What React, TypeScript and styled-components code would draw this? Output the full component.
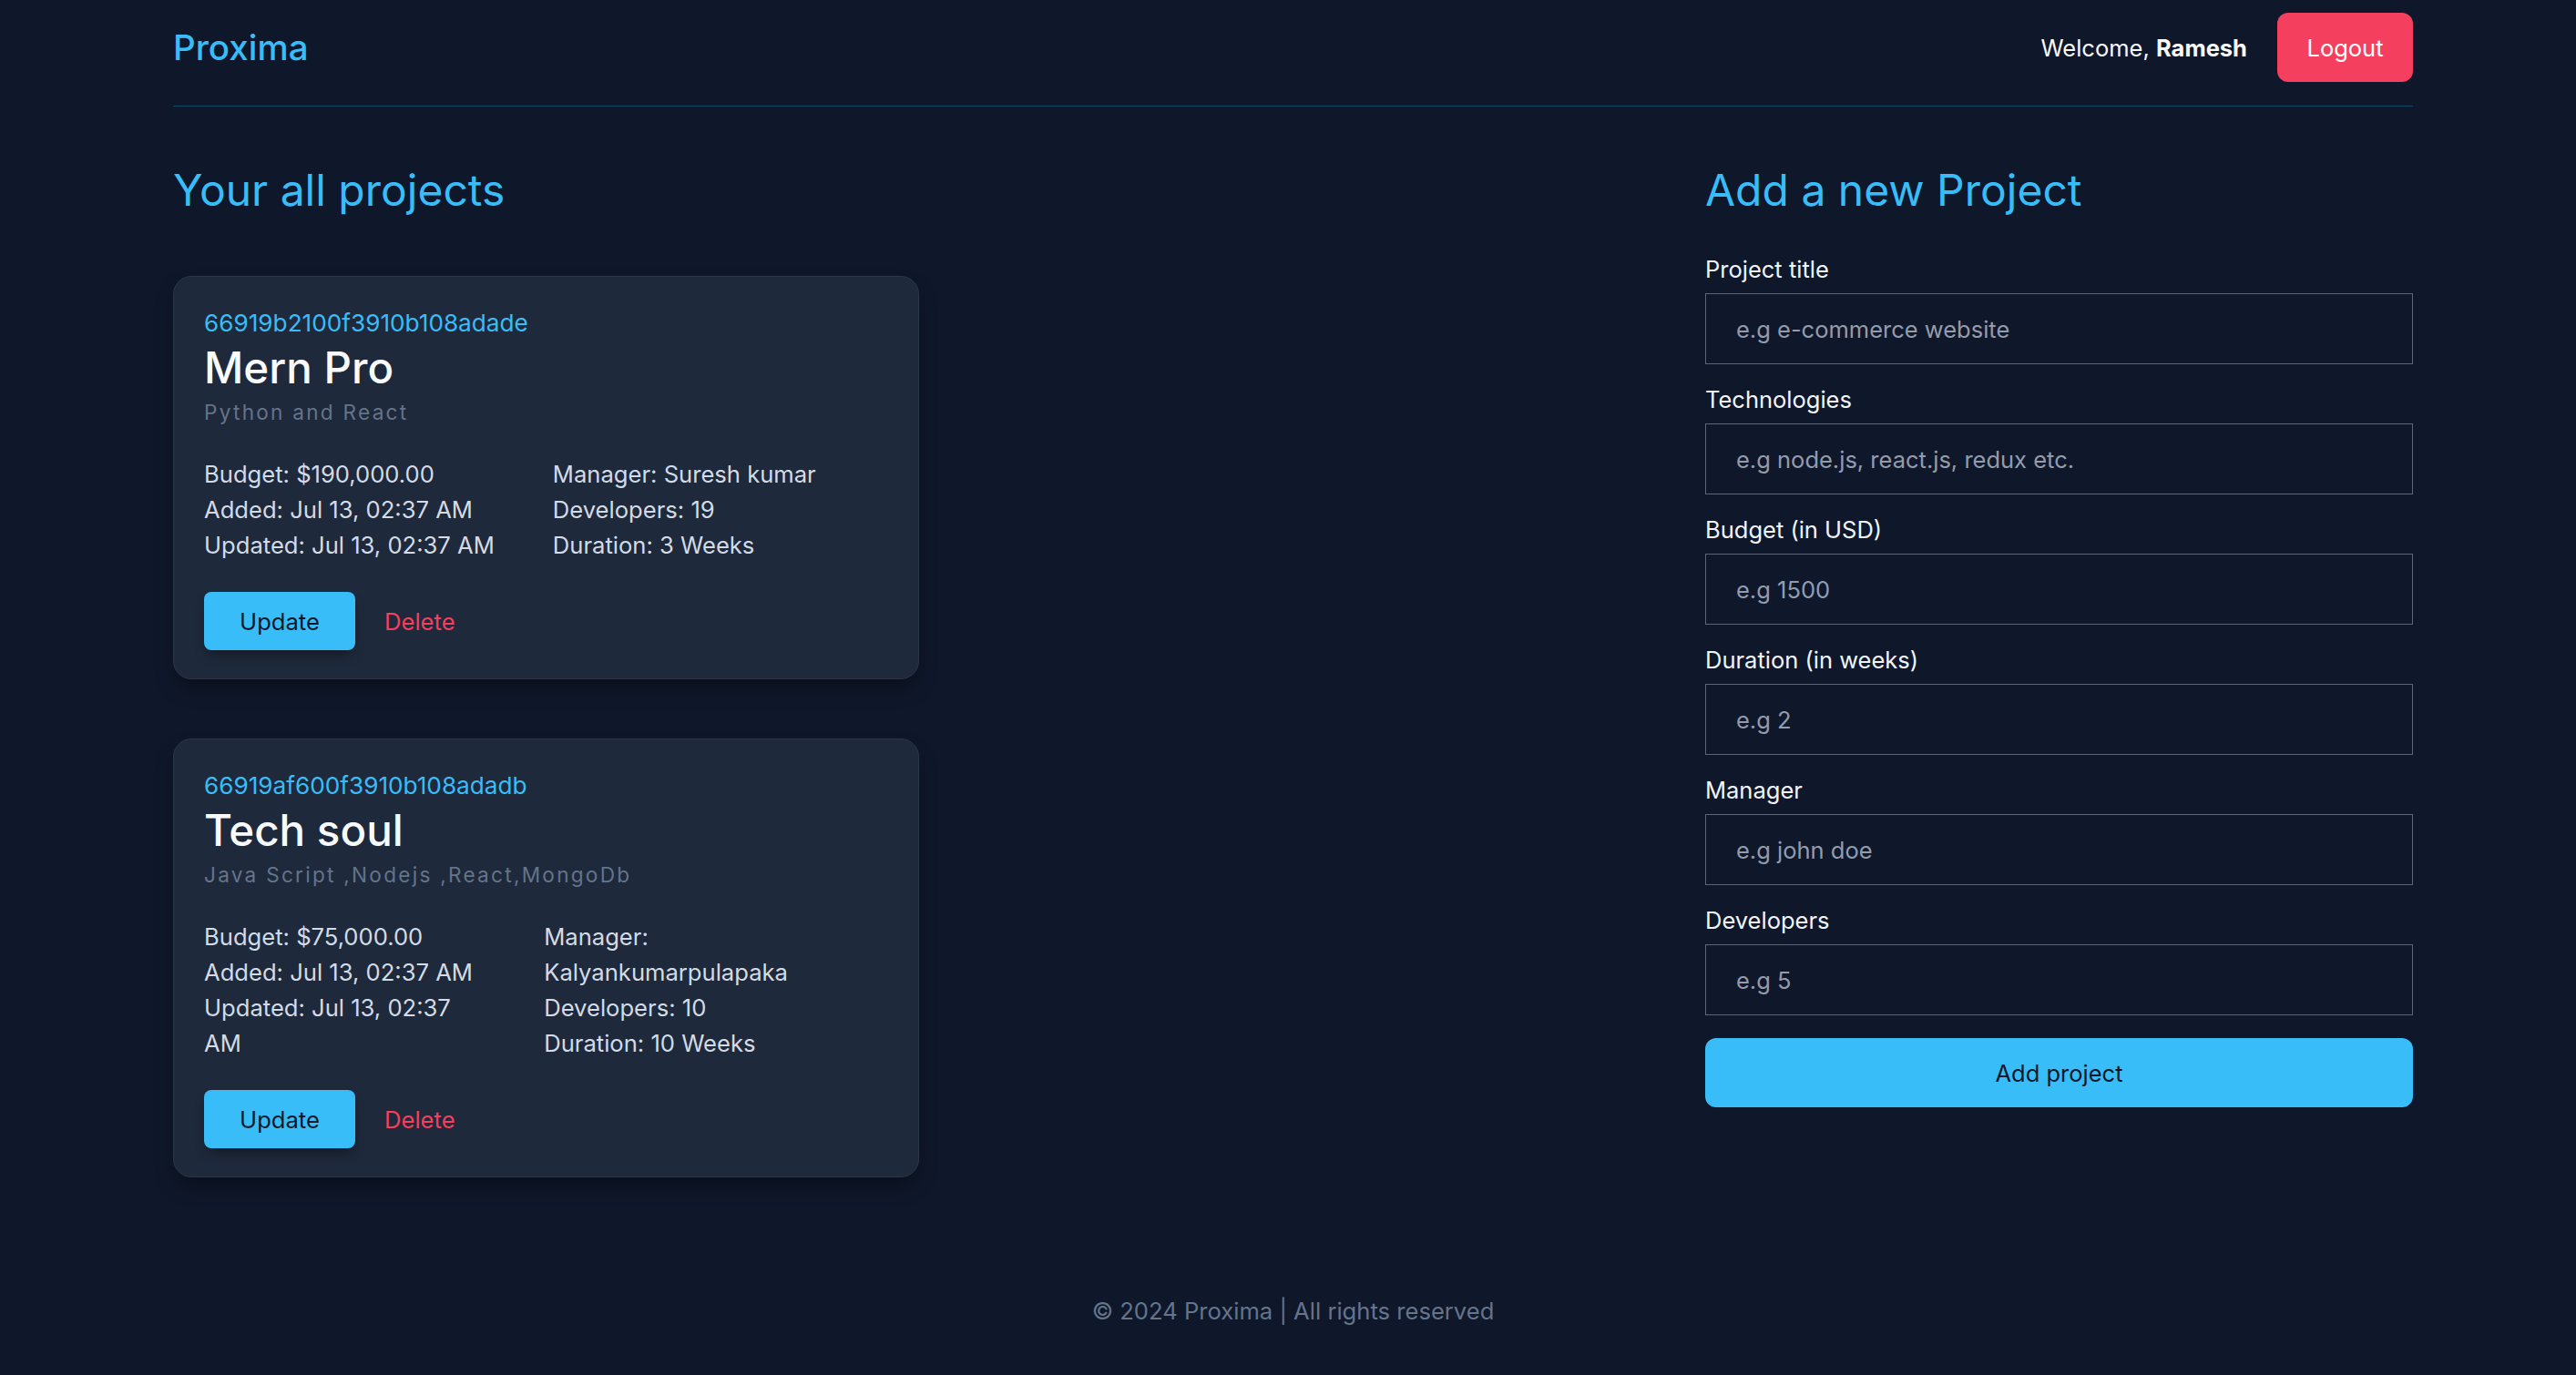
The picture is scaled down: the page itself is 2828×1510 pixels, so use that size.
import React from "react";
import styled, { createGlobalStyle } from "styled-components";

const GlobalStyle = createGlobalStyle`
  * { box-sizing: border-box; }
  html, body { margin: 0; padding: 0; background: #0f172a; }
  body { font-family: Inter, "Noto Sans", "Liberation Sans", sans-serif; color: #e2e8f0; }
`;

const Page = styled.div`
  min-height: 1510px;
  margin: 0 179px 0 190px;
  display: flex;
  flex-direction: column;
`;

const Header = styled.header`
  display: flex;
  align-items: center;
  justify-content: space-between;
  padding: 14px 0 26px;
  border-bottom: 1px solid #0e4560;
`;

const Brand = styled.div`
  font-size: 38.5px;
  line-height: 56px;
  color: #38bdf8;
  font-weight: 500;
`;

const UserArea = styled.div`
  display: flex;
  align-items: center;
  gap: 33px;
`;

const Welcome = styled.span`
  font-size: 25.5px;
  color: #f8fafc;
  strong { font-weight: 700; }
`;

const LogoutButton = styled.button`
  height: 76px;
  width: 149px;
  border: none;
  border-radius: 12px;
  background: #f43f5e;
  color: #ffffff;
  font-family: inherit;
  font-size: 25.5px;
  cursor: pointer;
`;

const Main = styled.main`
  display: grid;
  grid-template-columns: 1fr 777px;
  gap: 64px;
  padding-top: 63px;
`;

const Column = styled.section`
  display: flex;
  flex-direction: column;
`;

const SectionTitle = styled.h2`
  margin: 0;
  font-size: 48px;
  line-height: 58px;
  font-weight: 400;
  color: #38bdf8;
`;

const CardList = styled.div`
  display: flex;
  flex-direction: column;
  gap: 65px;
  margin-top: 65px;
`;

const Card = styled.article`
  width: 819px;
  padding: 31px 33px 31px;
  background: #1e293b;
  border: 1px solid #2b3648;
  border-radius: 20px;
  box-shadow: 0 12px 24px -6px rgba(0, 0, 0, 0.45);
`;

const ProjectId = styled.div`
  font-size: 26.2px;
  line-height: 39px;
  color: #38bdf8;
`;

const ProjectTitle = styled.h3`
  margin: 2px 0 0;
  font-size: 47.5px;
  line-height: 56px;
  font-weight: 500;
  color: #f8fafc;
`;

const Tech = styled.div`
  margin-top: 5px;
  font-size: 22.6px;
  line-height: 32px;
  letter-spacing: 0.1em;
  color: #64748b;
`;

const Details = styled.div`
  display: flex;
  gap: 64px;
  margin-top: 32px;
`;

const DetailCol = styled.div`
  display: flex;
  flex-direction: column;
`;

const DetailLine = styled.span`
  font-size: 25.6px;
  line-height: 39px;
  color: #d3dbe6;
`;

const Actions = styled.div`
  display: flex;
  align-items: center;
  gap: 32px;
  margin-top: 32px;
`;

const UpdateButton = styled.button`
  width: 166px;
  height: 64px;
  border: none;
  border-radius: 8px;
  background: #38bdf8;
  color: #0f172a;
  font-family: inherit;
  font-size: 25.6px;
  box-shadow: 0 8px 14px -4px rgba(0, 0, 0, 0.4);
  cursor: pointer;
`;

const DeleteButton = styled.button`
  border: none;
  padding: 0;
  background: transparent;
  color: #f43f5e;
  font-family: inherit;
  font-size: 25.6px;
  cursor: pointer;
`;

const Form = styled.form`
  display: flex;
  flex-direction: column;
  margin-top: 40px;
`;

const Field = styled.div`
  display: flex;
  flex-direction: column;
  margin-bottom: 21px;
`;

const Label = styled.label`
  font-size: 25.5px;
  line-height: 36px;
  color: #f1f5f9;
  margin-bottom: 8px;
`;

const Input = styled.input`
  height: 78px;
  width: 100%;
  padding: 0 33px;
  background: transparent;
  border: 1px solid #5b6678;
  border-radius: 0;
  color: #e2e8f0;
  font-family: inherit;
  font-size: 25.5px;
  outline: none;
  &::placeholder { color: #939cac; }
`;

const SubmitButton = styled.button`
  margin-top: 4px;
  height: 76px;
  width: 100%;
  border: none;
  border-radius: 12px;
  background: #38bdf8;
  color: #0f172a;
  font-family: inherit;
  font-size: 25.5px;
  cursor: pointer;
`;

const Footer = styled.footer`
  margin-top: 129px;
  padding-bottom: 52px;
  text-align: center;
  font-size: 25.6px;
  line-height: 36px;
  color: #64748b;
`;

type Project = {
  id: string;
  title: string;
  tech: string;
  budget: string;
  manager: string;
  developers: number;
  duration: string;
};

const projects: Project[] = [
  {
    id: "66919b2100f3910b108adade",
    title: "Mern Pro",
    tech: "Python and React",
    budget: "$190,000.00",
    manager: "Suresh kumar",
    developers: 19,
    duration: "3 Weeks",
  },
  {
    id: "66919af600f3910b108adadb",
    title: "Tech soul",
    tech: "Java Script ,Nodejs ,React,MongoDb",
    budget: "$75,000.00",
    manager: "Kalyankumarpulapaka",
    developers: 10,
    duration: "10 Weeks",
  },
];

const fields = [
  { label: "Project title", placeholder: "e.g e-commerce website" },
  { label: "Technologies", placeholder: "e.g node.js, react.js, redux etc." },
  { label: "Budget (in USD)", placeholder: "e.g 1500" },
  { label: "Duration (in weeks)", placeholder: "e.g 2" },
  { label: "Manager", placeholder: "e.g john doe" },
  { label: "Developers", placeholder: "e.g 5" },
];

export default function App() {
  return (
    <>
      <GlobalStyle />
      <Page>
        <Header>
          <Brand>Proxima</Brand>
          <UserArea>
            <Welcome>
              Welcome, <strong>Ramesh</strong>
            </Welcome>
            <LogoutButton>Logout</LogoutButton>
          </UserArea>
        </Header>
        <Main>
          <Column>
            <SectionTitle>Your all projects</SectionTitle>
            <CardList>
              {projects.map((p) => (
                <Card key={p.id}>
                  <ProjectId>{p.id}</ProjectId>
                  <ProjectTitle>{p.title}</ProjectTitle>
                  <Tech>{p.tech}</Tech>
                  <Details>
                    <DetailCol>
                      <DetailLine>Budget: {p.budget}</DetailLine>
                      <DetailLine>Added: Jul 13, 02:37 AM</DetailLine>
                      <DetailLine>Updated: Jul 13, 02:37 AM</DetailLine>
                    </DetailCol>
                    <DetailCol>
                      <DetailLine>Manager: {p.manager}</DetailLine>
                      <DetailLine>Developers: {p.developers}</DetailLine>
                      <DetailLine>Duration: {p.duration}</DetailLine>
                    </DetailCol>
                  </Details>
                  <Actions>
                    <UpdateButton>Update</UpdateButton>
                    <DeleteButton>Delete</DeleteButton>
                  </Actions>
                </Card>
              ))}
            </CardList>
          </Column>
          <Column>
            <SectionTitle>Add a new Project</SectionTitle>
            <Form onSubmit={(e) => e.preventDefault()}>
              {fields.map((f) => (
                <Field key={f.label}>
                  <Label>{f.label}</Label>
                  <Input placeholder={f.placeholder} />
                </Field>
              ))}
              <SubmitButton type="submit">Add project</SubmitButton>
            </Form>
          </Column>
        </Main>
        <Footer>© 2024 Proxima | All rights reserved</Footer>
      </Page>
    </>
  );
}
